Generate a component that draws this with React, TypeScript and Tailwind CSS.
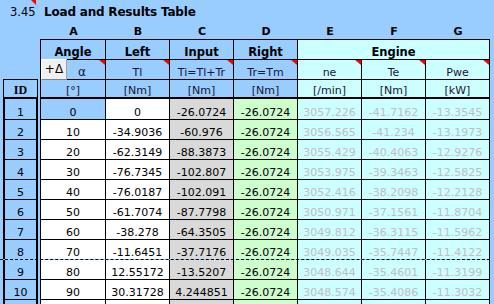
import React from "react";

const BLUE = "bg-[#99ccff]";

type Col = { w: string; bg: string; head: string; sub: string; unit: string };

const cols: Col[] = [
  { w: "w-[65px]", bg: "bg-[#99ccff]", head: "A", sub: "α", unit: "[°]" },
  { w: "w-[64px]", bg: "bg-[#99ccff]", head: "B", sub: "Tl", unit: "[Nm]" },
  { w: "w-[64px]", bg: "bg-[#99ccff]", head: "C", sub: "Ti=Tl+Tr", unit: "[Nm]" },
  { w: "w-[64px]", bg: "bg-[#99ccff]", head: "D", sub: "Tr=Tm", unit: "[Nm]" },
  { w: "w-[64px]", bg: "bg-[#ccffff]", head: "E", sub: "ne", unit: "[/min]" },
  { w: "w-[64px]", bg: "bg-[#ccffff]", head: "F", sub: "Te", unit: "[Nm]" },
  { w: "w-[64px]", bg: "bg-[#ccffff]", head: "G", sub: "Pwe", unit: "[kW]" },
];

const A = ["0", "10", "20", "30", "40", "50", "60", "70", "80", "90", ""];
const B = ["0", "-34.9036", "-62.3149", "-76.7345", "-76.0187", "-61.7074", "-38.278", "-11.6451", "12.55172", "30.31728", ""];
const C = ["-26.0724", "-60.976", "-88.3873", "-102.807", "-102.091", "-87.7798", "-64.3505", "-37.7176", "-13.5207", "4.244851", ""];
const D = Array.from({ length: 10 }, () => "-26.0724").concat([""]);
const E = ["3057.226", "3056.565", "3055.429", "3053.975", "3052.416", "3050.971", "3049.812", "3049.035", "3048.644", "3048.574", ""];
const Fv = ["-41.7162", "-41.234", "-40.4063", "-39.3463", "-38.2098", "-37.1561", "-36.3115", "-35.7447", "-35.4601", "-35.4086", ""];
const G = ["-13.3545", "-13.1973", "-12.9276", "-12.5825", "-12.2128", "-11.8704", "-11.5962", "-11.4122", "-11.3199", "-11.3032", ""];

const dataBg = ["", "bg-white", "bg-[#d9d9d9]", "bg-[#ccffcc]", "bg-[#ccffff]", "bg-[#ccffff]", "bg-[#ccffff]"];
const dataColor = ["text-black", "text-black", "text-black", "text-black", "text-[#c4bcc4]", "text-[#c4bcc4]", "text-[#c4bcc4]"];

function Tri() {
  return (
    <div className="absolute top-0 right-0 w-0 h-0 border-l-[6px] border-l-transparent border-t-[5px] border-t-[#ff0000]" />
  );
}

export default function App() {
  const rows = Array.from({ length: 11 }, (_, i) => i);
  return (
    <div className={`w-[494px] h-[304px] overflow-hidden ${BLUE} font-['DejaVu_Sans',Verdana,sans-serif] text-[11px] leading-[13px] text-black`}>
      {/* title row */}
      <div className="relative flex h-[24px] items-end pb-[5px]">
        <div className="absolute top-0 left-[31px] w-0 h-0 border-l-[5px] border-l-transparent border-t-[5px] border-t-[#ff0000]" />
        <div className="w-[37px] flex items-end pl-[10px] text-[11.5px] leading-[14px]">
          <span>3.45</span>
        </div>
        <div className="ml-[7px] font-bold text-[12px] leading-[14px] tracking-[-0.2px]">Load and Results Table</div>
      </div>

      {/* column letters */}
      <div className="flex h-[15px]">
        <div className="w-[40px] shrink-0" />
        <div className="flex border-l border-transparent">
          {cols.map((c) => (
            <div key={c.head} className={`${c.w} shrink-0 flex items-end justify-center pb-[1px] font-bold`}>
              {c.head}
            </div>
          ))}
        </div>
      </div>

      {/* header row 1 */}
      <div className="flex">
        <div className="w-[40px] shrink-0" />
        <div className="flex border-l border-t border-black">
          {cols.slice(0, 4).map((c, i) => (
            <div key={i} className={`${c.w} shrink-0 h-[20px] border-r border-b border-black ${c.bg} flex items-end justify-center font-bold text-[11.5px]`}>
              {["Angle", "Left", "Input", "Right"][i]}
            </div>
          ))}
          <div className="w-[192px] shrink-0 h-[20px] border-r border-b border-black bg-[#ccffff] flex items-end justify-center font-bold text-[11.5px]">
            Engine
          </div>
        </div>
      </div>

      {/* header row 2 */}
      <div className="flex">
        <div className="w-[40px] shrink-0 flex">
          <div className="w-[3px]" />
          <div className="w-[35px] h-[20px] border-b border-black" />
        </div>
        <div className="flex border-l border-black">
          {cols.map((c, i) => (
            <div
              key={i}
              className={`relative ${c.w} shrink-0 h-[20px] border-r border-b border-black ${c.bg} flex items-end justify-center text-[#1c1238] ${i === 0 ? "pl-[18px] text-[12px]" : ""}`}
            >
              {i === 0 && (
                <div className="absolute left-0 top-[-1px] w-[26px] h-[21px] bg-[#f0f0f0] border-t border-l border-t-white border-l-white border-r border-b border-r-[#a0a0a0] border-b-[#808080] flex items-center justify-center text-[12px] text-black z-10">
                  +Δ
                </div>
              )}
              {c.sub}
              <Tri />
            </div>
          ))}
        </div>
      </div>

      {/* units row */}
      <div className="flex">
        <div className="w-[40px] shrink-0 flex">
          <div className="w-[3px]" />
          <div className="w-[35px] h-[19px] border-l border-r border-b-2 border-black flex items-end justify-center font-['Liberation_Serif',serif] font-bold text-[12px]">
            ID
          </div>
        </div>
        <div className="flex border-l border-black">
          {cols.map((c, i) => (
            <div key={i} className={`${c.w} shrink-0 h-[19px] border-r border-b-2 border-black ${c.bg} flex items-end justify-center text-[#1c1238]`}>
              {c.unit}
            </div>
          ))}
        </div>
      </div>

      {/* data rows */}
      {rows.map((r) => {
        const dashed = r === 7;
        const h = r === 0 ? "h-[21px]" : dashed ? "h-[19px]" : "h-[20px]";
        const vals = [A[r], B[r], C[r], D[r], E[r], Fv[r], G[r]];
        return (
          <div key={r} className={`flex w-[490px] ${dashed ? "border-b border-dashed border-black" : ""}`}>
            <div className="w-[40px] shrink-0 flex">
              <div className="w-[3px]" />
              <div className={`w-[35px] ${h} border-l-2 border-r-2 border-black ${dashed ? "" : "border-b"} ${BLUE} flex items-end justify-center`}>
                {r < 10 ? String(r + 1) : ""}
              </div>
            </div>
            <div className="flex border-l border-black">
              {cols.map((c, i) => (
                <div
                  key={i}
                  className={`${c.w} shrink-0 ${h} border-r border-black ${dashed ? "" : "border-b"} ${i === 0 ? (r === 0 ? BLUE : "bg-white") : dataBg[i]} ${dataColor[i]} flex items-end justify-center`}
                >
                  {vals[i]}
                </div>
              ))}
            </div>
          </div>
        );
      })}
    </div>
  );
}
